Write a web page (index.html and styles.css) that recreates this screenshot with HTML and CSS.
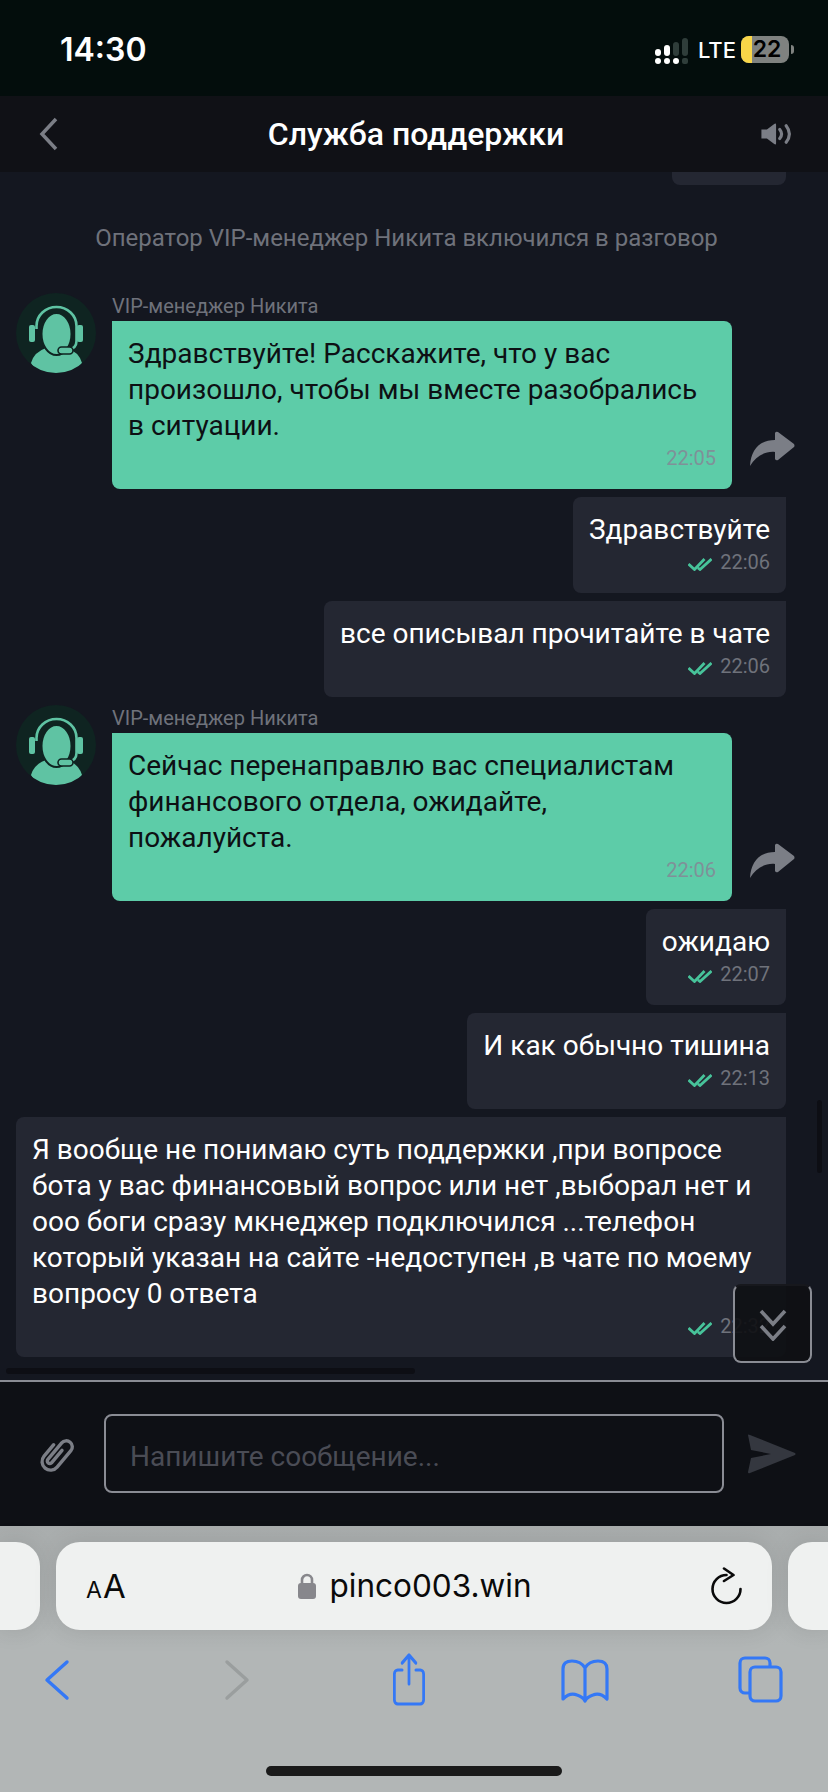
FILE: index.html
```html
<!DOCTYPE html>
<html lang="ru">
<head>
<meta charset="utf-8">
<title>Служба поддержки</title>
<link rel="stylesheet" href="styles.css">
</head>
<body>
<div class="phone">
  <div class="status">
    <span class="clock">14:30</span>
    <div class="status-right">
      <svg class="signal" width="34" height="28" viewBox="0 0 34 28">
        <g fill="#fff">
          <rect x="0" y="12" width="6" height="7" rx="3"/><rect x="0" y="21" width="6" height="6" rx="3"/>
          <rect x="9" y="8" width="6" height="11" rx="3"/><rect x="9" y="21" width="6" height="6" rx="3"/>
          <rect x="18" y="21" width="6" height="6" rx="3"/>
        </g>
        <g fill="#2f3d3a">
          <rect x="18" y="5" width="6" height="14" rx="3"/>
          <rect x="27" y="1" width="6" height="18" rx="3"/><rect x="27" y="21" width="6" height="6" rx="2"/>
        </g>
      </svg>
      <span class="lte">LTE</span>
      <div class="battery"><span class="battery-fill"></span><span class="battery-num">22</span></div>
      <span class="battery-nub"></span>
    </div>
  </div>

  <header class="topbar">
    <svg class="back" width="20" height="34" viewBox="0 0 20 34"><path d="M17 2 3 17l14 15" fill="none" stroke="#7b7e86" stroke-width="3.500"/></svg>
    <h1 class="title">Служба поддержки</h1>
    <svg class="sound" width="32" height="22" viewBox="0 0 34 24">
      <path d="M0 7h6l8-6q2-1 2 1v20q0 2-2 1l-8-6H0z" fill="#7b7e86"/>
      <path d="M20 7q4 5 0 10M27 3q7 9 0 18" fill="none" stroke="#7b7e86" stroke-width="3.400" stroke-linecap="round"/>
    </svg>
  </header>

  <main class="chat">
    <div class="stub"></div>
    <p class="system">Оператор VIP-менеджер Никита включился в разговор</p>

    <div class="agent agent-first">
      <svg class="avatar" width="80" height="80" viewBox="0 0 80 80">
        <circle cx="40" cy="40" r="40" fill="#0f2421"/>
        <clipPath id="av1"><circle cx="40" cy="40" r="40"/></clipPath>
        <g clip-path="url(#av1)">
          <path d="M15 70q3-11 15-15h21q12 4 15 15l-8 12H22z" fill="#5fc3a3"/>
          <ellipse cx="40.500" cy="41" rx="15" ry="21" fill="#5fc3a3" stroke="#0f2421" stroke-width="2"/>
          <path d="M20.500 36v-3a20 19 0 0 1 40 0v15q0 8-9 9" fill="none" stroke="#5fc3a3" stroke-width="2.600"/>
          <rect x="13" y="32" width="6" height="17" rx="2" fill="#5fc3a3"/>
          <rect x="61" y="32" width="6" height="17" rx="2" fill="#5fc3a3"/>
          <rect x="42" y="54" width="15" height="7" rx="3.500" fill="#5fc3a3" stroke="#0f2421" stroke-width="1.600"/>
        </g>
      </svg>
      <div class="agent-col">
        <div class="agent-name">VIP-менеджер Никита</div>
        <div class="agent-row">
          <div class="bubble bubble-in">
            <div class="text">Здравствуйте! Расскажите, что у вас<br>произошло, чтобы мы вместе разобрались<br>в ситуации.</div>
            <div class="meta meta-in">22:05</div>
          </div>
          <svg class="share" width="45" height="35" viewBox="0 0 45 35"><path d="M0 35C1 18 10 9 25 9V2q1-2 3-1l16 12q1 2 0 3L28 29q-2 1-3-1v-7C15 20 6 25 0 35z" fill="#7b7e86"/></svg>
        </div>
      </div>
    </div>

    <div class="bubble bubble-out out-a">
      <div class="text">Здравствуйте</div>
      <div class="meta"><svg class="ticks" width="24" height="13" viewBox="0 0 24 13"><path d="M0.500 6l6 5.500L16.500 1M10 10l2 1.500L23.500 1" fill="none" stroke="#47c39a" stroke-width="2.800"/></svg><span>22:06</span></div>
    </div>
    <div class="bubble bubble-out out-a">
      <div class="text">все описывал прочитайте в чате</div>
      <div class="meta"><svg class="ticks" width="24" height="13" viewBox="0 0 24 13"><path d="M0.500 6l6 5.500L16.500 1M10 10l2 1.500L23.500 1" fill="none" stroke="#47c39a" stroke-width="2.800"/></svg><span>22:06</span></div>
    </div>

    <div class="agent">
      <svg class="avatar" width="80" height="80" viewBox="0 0 80 80">
        <circle cx="40" cy="40" r="40" fill="#0f2421"/>
        <clipPath id="av2"><circle cx="40" cy="40" r="40"/></clipPath>
        <g clip-path="url(#av2)">
          <path d="M15 70q3-11 15-15h21q12 4 15 15l-8 12H22z" fill="#5fc3a3"/>
          <ellipse cx="40.500" cy="41" rx="15" ry="21" fill="#5fc3a3" stroke="#0f2421" stroke-width="2"/>
          <path d="M20.500 36v-3a20 19 0 0 1 40 0v15q0 8-9 9" fill="none" stroke="#5fc3a3" stroke-width="2.600"/>
          <rect x="13" y="32" width="6" height="17" rx="2" fill="#5fc3a3"/>
          <rect x="61" y="32" width="6" height="17" rx="2" fill="#5fc3a3"/>
          <rect x="42" y="54" width="15" height="7" rx="3.500" fill="#5fc3a3" stroke="#0f2421" stroke-width="1.600"/>
        </g>
      </svg>
      <div class="agent-col">
        <div class="agent-name">VIP-менеджер Никита</div>
        <div class="agent-row">
          <div class="bubble bubble-in">
            <div class="text">Сейчас перенаправлю вас специалистам<br>финансового отдела, ожидайте,<br>пожалуйста.</div>
            <div class="meta meta-in">22:06</div>
          </div>
          <svg class="share" width="45" height="35" viewBox="0 0 45 35"><path d="M0 35C1 18 10 9 25 9V2q1-2 3-1l16 12q1 2 0 3L28 29q-2 1-3-1v-7C15 20 6 25 0 35z" fill="#7b7e86"/></svg>
        </div>
      </div>
    </div>

    <div class="bubble bubble-out out-a">
      <div class="text">ожидаю</div>
      <div class="meta"><svg class="ticks" width="24" height="13" viewBox="0 0 24 13"><path d="M0.500 6l6 5.500L16.500 1M10 10l2 1.500L23.500 1" fill="none" stroke="#47c39a" stroke-width="2.800"/></svg><span>22:07</span></div>
    </div>
    <div class="bubble bubble-out out-a">
      <div class="text">И как обычно тишина</div>
      <div class="meta"><svg class="ticks" width="24" height="13" viewBox="0 0 24 13"><path d="M0.500 6l6 5.500L16.500 1M10 10l2 1.500L23.500 1" fill="none" stroke="#47c39a" stroke-width="2.800"/></svg><span>22:13</span></div>
    </div>
    <div class="bubble bubble-out out-a out-long">
      <div class="text">Я вообще не понимаю суть поддержки ,при вопросе<br>бота у вас финансовый вопрос или нет ,выборал нет и<br>ооо боги сразу мкнеджер подключился ...телефон<br>который указан на сайте -недоступен ,в чате по моему<br>вопросу 0 ответа</div>
      <div class="meta"><svg class="ticks" width="24" height="13" viewBox="0 0 24 13"><path d="M0.500 6l6 5.500L16.500 1M10 10l2 1.500L23.500 1" fill="none" stroke="#47c39a" stroke-width="2.800"/></svg><span>22:32</span></div>
    </div>

    <div class="scroll-v"></div>
    <div class="scroll-h"></div>
    <div class="to-bottom">
      <svg width="28" height="32" viewBox="0 0 28 32"><path d="M2 2l12 13L26 2M2 17l12 13 12-13" fill="none" stroke="#7b7e86" stroke-width="3.600"/></svg>
    </div>
  </main>

  <div class="composer">
    <svg class="attach" width="36" height="40" viewBox="0 0 36 40">
      <g transform="rotate(40 18 20)"><path d="M9.500 12v15a8.500 8.500 0 0 0 17 0V5.500a6 6 0 0 0-12 0V27a2.500 2.500 0 0 0 5 0V11" fill="none" stroke="#7b7e86" stroke-width="3.400" stroke-linecap="round" transform="translate(0 3)"/></g>
    </svg>
    <div class="field"><span class="placeholder">Напишите сообщение...</span></div>
    <svg class="send" width="48" height="40" viewBox="0 0 48 40"><path d="M0 1q0-1 2 0l45 18q1 1 0 2L2 39q-2 1-2-1l3-14 20-4-20-4z" fill="#34373f"/></svg>
  </div>

  <div class="safari">
    <div class="pills">
      <div class="pill-side pill-left"></div>
      <div class="pill-main">
        <div class="aa"><span class="a-small">A</span><span class="a-big">A</span></div>
        <div class="url">
          <svg class="lock" width="18" height="26" viewBox="0 0 18 26"><path d="M4 12V7a5 5 0 0 1 10 0v5" fill="none" stroke="#87878c" stroke-width="2.600"/><rect y="10" width="18" height="16" rx="3" fill="#87878c"/></svg>
          <span>pinco003.win</span>
        </div>
        <svg class="reload" width="32" height="38" viewBox="0 0 32 38"><path d="M15.500 8A14 14 0 1 0 29.500 22" fill="none" stroke="#0a0a0a" stroke-width="2.600" stroke-linecap="round"/><path d="M13 1.500l9.500 6.500-9.500 6" fill="none" stroke="#0a0a0a" stroke-width="2.600" stroke-linecap="round" stroke-linejoin="round"/></svg>
      </div>
      <div class="pill-side pill-right"></div>
    </div>
    <nav class="tools">
      <svg width="60" height="60" viewBox="0 0 60 60"><path d="M40 12 20 30l20 18" fill="none" stroke="#3478f6" stroke-width="3.400" stroke-linecap="round" stroke-linejoin="round"/></svg>
      <svg width="60" height="60" viewBox="0 0 60 60"><path d="M24 12l20 18-20 18" fill="none" stroke="#9a9e9e" stroke-width="3.400" stroke-linecap="round" stroke-linejoin="round"/></svg>
      <svg width="60" height="60" viewBox="0 0 60 60"><path d="M30 34V6M22 13l8-8 8 8M22 20h-5a4 4 0 0 0-4 4v26a4 4 0 0 0 4 4h26a4 4 0 0 0 4-4V24a4 4 0 0 0-4-4h-5" fill="none" stroke="#3478f6" stroke-width="3.200" stroke-linecap="round" stroke-linejoin="round" transform="translate(30 30) scale(.86 1) translate(-30 -30)"/></svg>
      <svg width="60" height="60" viewBox="0 0 60 60"><path d="M30 18q-4-7-13-7-9 0-9 8v30q7-7 14-4 6 2 8 6 2-4 8-6 7-3 14 4V19q0-8-9-8-9 0-13 7zM30 18v32" fill="none" stroke="#3478f6" stroke-width="3.200" stroke-linejoin="round"/></svg>
      <svg width="60" height="60" viewBox="0 0 60 60"><path d="M18 43h-4a5 5 0 0 1-5-5V13a5 5 0 0 1 5-5h20a5 5 0 0 1 5 5v3" fill="none" stroke="#3478f6" stroke-width="3.200"/><rect x="19" y="17" width="31" height="34" rx="5" fill="none" stroke="#3478f6" stroke-width="3.200"/></svg>
    </nav>
    <div class="home"></div>
  </div>
</div>
</body>
</html>
```
FILE: styles.css
```css
* { box-sizing: border-box; }
html, body { margin: 0; padding: 0; }
body { background: #141720; font-family: Roboto, "Liberation Sans", sans-serif; }

.phone { width: 828px; height: 1792px; display: flex; flex-direction: column; overflow: hidden; }

.status { height: 96px; flex: none; background: #030d0c; display: flex; align-items: flex-start; justify-content: space-between; padding: 30px 34px 0 60px; color: #fff; }
.clock { font-family: Inter, sans-serif; font-weight: 600; font-size: 32px; line-height: 40px; }
.status-right { display: flex; align-items: flex-start; margin-top: 6px; margin-left: auto; }
.signal { margin-right: 9px; margin-top: 1px; }
.lte { font-family: Inter, sans-serif; font-weight: 500; font-size: 22px; line-height: 28px; width: 43px; }
.battery { position: relative; width: 48px; height: 27px; border-radius: 8px; background: #7f8280; overflow: hidden; display: flex; align-items: center; justify-content: center; }
.battery-fill { position: absolute; left: 0; top: 0; bottom: 0; width: 11px; background: #f9d648; }
.battery-num { position: relative; font-family: Inter, sans-serif; font-weight: 600; font-size: 23px; color: #000; line-height: 27px; margin-left: 4px; }
.battery-nub { width: 3px; height: 9px; margin: 9px 0 0 2px; background: #7f8280; border-radius: 0 3px 3px 0; }

.topbar { height: 76px; flex: none; background: #101116; display: grid; grid-template-columns: 1fr auto 1fr; align-items: center; padding: 0 35px 0 39px; }
.title { margin: 0; color: #fff; font-size: 32px; font-weight: 500; line-height: 40px; }
.sound { justify-self: end; }

.chat { position: relative; height: 1208px; flex: none; background: #141720; overflow: hidden; display: flex; flex-direction: column; align-items: flex-end; }
.stub { width: 114px; height: 13px; margin-right: 42px; background: #242732; border-radius: 0 0 8px 8px; flex: none; }
.system { align-self: stretch; margin: 38px 0 0; padding-right: 15px; text-align: center; font-size: 24px; line-height: 30px; color: #6f727b; }

.agent { align-self: stretch; display: flex; gap: 16px; padding-left: 16px; margin-top: 8px; flex: none; }
.agent-first { margin-top: 40px; }
.avatar { flex: none; }
.agent-name { height: 28px; font-size: 20px; line-height: 26px; color: #6f727b; }
.agent-row { display: flex; align-items: flex-end; gap: 18px; }
.share { flex: none; margin-bottom: 23px; }

.bubble { padding: 15px 16px 17px; flex: none; }
.bubble-in { width: 620px; background: #5dcca8; color: #0d1014; border-radius: 0 8px 8px 8px; }
.bubble-out { margin-right: 42px; background: #242732; color: #fff; border-radius: 8px 0 8px 8px; }
.out-a { margin-top: 8px; }
.out-long { width: 770px; }
.text { font-size: 28px; line-height: 36px; white-space: nowrap; }
.meta { display: flex; justify-content: flex-end; align-items: center; gap: 8px; height: 28px; font-size: 20px; line-height: 28px; color: #6f727b; }
.meta-in { color: #7f9198; }
.ticks { flex: none; margin-top: 4px; }

.scroll-v { position: absolute; right: 6px; top: 928px; width: 5px; height: 73px; background: #0d0e14; border-radius: 3px; }
.scroll-h { position: absolute; left: 6px; top: 1196px; width: 409px; height: 6px; background: #0d0e14; border-radius: 3px; }
.to-bottom { position: absolute; left: 733px; top: 1112px; width: 79px; height: 79px; border-radius: 8px; background: rgba(15, 16, 20, .92); border: 2px solid #8a8c94; border-top-color: #17181d; display: flex; align-items: center; justify-content: center; padding-top: 3px; }

.composer { height: 146px; flex: none; background: #0e1015; border-top: 2px solid #8a8c94; display: flex; align-items: flex-start; padding: 32px 0 0 39px; }
.attach { flex: none; margin: 20px 29px 0 0; }
.field { width: 620px; height: 79px; flex: none; border: 2px solid #8a8c94; border-radius: 8px; display: flex; align-items: center; padding: 6px 0 0 24px; }
.placeholder { font-size: 28px; color: #4a4c55; }
.send { flex: none; margin: 20px 0 0 24px; }

.safari { flex: 1; background: linear-gradient(#a9adad, #b2b6b6 120px); display: flex; flex-direction: column; }
.pills { display: flex; gap: 16px; padding-top: 16px; height: 104px; flex: none; }
.pill-side { width: 40px; height: 88px; background: #eff1f0; box-shadow: 0 0 24px rgba(0, 0, 0, .1); }
.pill-left { border-radius: 0 24px 24px 0; }
.pill-right { border-radius: 24px 0 0 24px; }
.pill-main { width: 716px; height: 88px; background: #eff1f0; border-radius: 24px; box-shadow: 0 0 24px rgba(0, 0, 0, .1); display: grid; grid-template-columns: 1fr auto 1fr; align-items: center; padding: 0 29px 0 30px; }
.aa { display: flex; align-items: baseline; gap: 1px; color: #0a0a0a; font-family: Inter, sans-serif; line-height: 1; }
.a-small { font-size: 23px; }
.a-big { font-size: 33px; }
.url { display: flex; align-items: center; gap: 14px; font-family: Inter, sans-serif; font-size: 31.500px; line-height: 40px; color: #0a0a0a; }
.lock { flex: none; }
.reload { justify-self: end; }

.tools { display: flex; gap: 116px; padding: 20px 0 0 27px; height: 80px; flex: none; }
.tools svg { flex: none; }
.home { width: 296px; height: 10px; margin: 56px 0 0 266px; background: #1a1a1a; border-radius: 5px; flex: none; }
```
